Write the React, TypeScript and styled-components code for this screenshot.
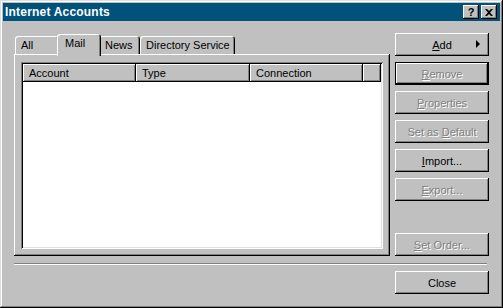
import styled, { createGlobalStyle } from "styled-components";

const GlobalStyle = createGlobalStyle`
  html, body {
    margin: 0;
    padding: 0;
    background: #c0c0c0;
  }
  body {
    font-family: "Liberation Sans", Arial, sans-serif;
    font-size: 11px;
    color: #000;
  }
`;

const raised = `
  box-shadow: inset -1px -1px #000, inset 1px 1px #fff, inset -2px -2px #808080;
`;

const Window = styled.div`
  width: 503px;
  height: 308px;
  box-sizing: border-box;
  padding: 3px;
  background: #c0c0c0;
  box-shadow: inset -1px -1px #000, inset 1px 1px #dfdfdf,
    inset -2px -2px #808080, inset 2px 2px #fff;
  display: flex;
  flex-direction: column;
`;

const TitleBar = styled.div`
  height: 18px;
  background: #00527a;
  display: flex;
  align-items: center;
  padding: 0 3px 0 2px;
`;

const Title = styled.span`
  flex: 1;
  color: #fff;
  font-weight: bold;
  font-size: 12px;
  letter-spacing: 0.2px;
`;

const TitleButton = styled.div`
  width: 16px;
  height: 14px;
  margin-left: 2px;
  background: #c0c0c0;
  ${raised}
  display: flex;
  align-items: center;
  justify-content: center;
  font-weight: bold;
  font-size: 11px;
  line-height: 1;
`;

const Content = styled.div`
  flex: 1;
  display: flex;
  flex-direction: column;
  padding: 12px 11px 0 11px;
`;

const TopRow = styled.div`
  display: flex;
  gap: 5px;
`;

const LeftCol = styled.div`
  width: 376px;
  display: flex;
  flex-direction: column;
`;

const TabStrip = styled.div`
  height: 21px;
  display: flex;
  align-items: flex-end;
  padding-left: 1px;
`;

const Tab = styled.div<{ $w: number; $active?: boolean }>`
  position: relative;
  box-sizing: border-box;
  width: ${(p) => p.$w + (p.$active ? 4 : 0)}px;
  height: ${(p) => (p.$active ? 22 : 18)}px;
  margin: ${(p) => (p.$active ? "0 -2px -2px -2px" : "0")};
  z-index: ${(p) => (p.$active ? 2 : 1)};
  padding: ${(p) => (p.$active ? "3px 0 0 8px" : "3px 0 0 6px")};
  background: #c0c0c0;
  border-radius: 3px 3px 0 0;
  box-shadow: inset 1px 1px #fff, inset -1px 0 #000, inset -2px 0 #808080;
  white-space: nowrap;
`;

const Panel = styled.div`
  height: 202px;
  box-sizing: border-box;
  padding: 8px 7px 7px 7px;
  ${raised}
`;

const ListView = styled.div`
  height: 187px;
  box-sizing: border-box;
  padding: 2px;
  background: #fff;
  box-shadow: inset 1px 1px #808080, inset -1px -1px #fff,
    inset 2px 2px #000, inset -2px -2px #dfdfdf;
`;

const Header = styled.div`
  display: flex;
  height: 18px;
  background: #c0c0c0;
`;

const HeaderCell = styled.div<{ $w?: number }>`
  box-sizing: border-box;
  ${(p) => (p.$w ? `width: ${p.$w}px;` : "flex: 1;")}
  height: 18px;
  padding: 3px 0 0 6px;
  ${raised}
`;

const RightCol = styled.div`
  width: 94px;
  display: flex;
  flex-direction: column;
  gap: 6px;
`;

const Button = styled.div<{ $disabled?: boolean; $default?: boolean }>`
  position: relative;
  box-sizing: border-box;
  height: 23px;
  width: 94px;
  display: flex;
  align-items: center;
  justify-content: center;
  background: #c0c0c0;
  color: ${(p) => (p.$disabled ? "#808080" : "#000")};
  text-shadow: ${(p) => (p.$disabled ? "1px 1px #fff" : "none")};
  box-shadow: ${(p) =>
    p.$default
      ? "inset 0 0 0 1px #000, inset -2px -2px #000, inset 2px 2px #fff, inset -3px -3px #808080"
      : "inset -1px -1px #000, inset 1px 1px #fff, inset -2px -2px #808080"};
`;

const Spacer = styled.div`
  flex: 1;
`;

const Arrow = styled.span`
  position: absolute;
  right: 9px;
  top: 7px;
  width: 0;
  height: 0;
  border-top: 4px solid transparent;
  border-bottom: 4px solid transparent;
  border-left: 4px solid #000;
`;

const Separator = styled.div`
  margin-top: 7px;
  height: 1px;
  background: #808080;
  border-bottom: 1px solid #fff;
  margin-right: 2px;
`;

const Footer = styled.div`
  display: flex;
  justify-content: flex-end;
  margin-top: 6px;
`;

export default function App() {
  return (
    <>
      <GlobalStyle />
      <Window>
        <TitleBar>
          <Title>Internet Accounts</Title>
          <TitleButton>?</TitleButton>
          <TitleButton>
            <svg width="8" height="7" viewBox="0 0 8 7">
              <path d="M0 0h2l2 2 2-2h2L5 3.5 8 7H6L4 5 2 7H0l3-3.5z" fill="#000" />
            </svg>
          </TitleButton>
        </TitleBar>
        <Content>
          <TopRow>
            <LeftCol>
              <TabStrip>
                <Tab $w={44}>All</Tab>
                <Tab $w={40} $active>
                  Mail
                </Tab>
                <Tab $w={41}>News</Tab>
                <Tab $w={95}>Directory Service</Tab>
              </TabStrip>
              <Panel>
                <ListView>
                  <Header>
                    <HeaderCell $w={113}>Account</HeaderCell>
                    <HeaderCell $w={114}>Type</HeaderCell>
                    <HeaderCell $w={113}>Connection</HeaderCell>
                    <HeaderCell />
                  </Header>
                </ListView>
              </Panel>
            </LeftCol>
            <RightCol>
              <Button>
                <span>
                  <u>A</u>dd
                </span>
                <Arrow />
              </Button>
              <Button $disabled $default>
                <span>
                  <u>R</u>emove
                </span>
              </Button>
              <Button $disabled>
                <span>
                  <u>P</u>roperties
                </span>
              </Button>
              <Button $disabled>
                <span>
                  Set as <u>D</u>efault
                </span>
              </Button>
              <Button>
                <span>
                  <u>I</u>mport...
                </span>
              </Button>
              <Button $disabled>
                <span>
                  <u>E</u>xport...
                </span>
              </Button>
              <Spacer />
              <Button $disabled>
                <span>
                  <u>S</u>et Order...
                </span>
              </Button>
            </RightCol>
          </TopRow>
          <Separator />
          <Footer>
            <Button>Close</Button>
          </Footer>
        </Content>
      </Window>
    </>
  );
}
